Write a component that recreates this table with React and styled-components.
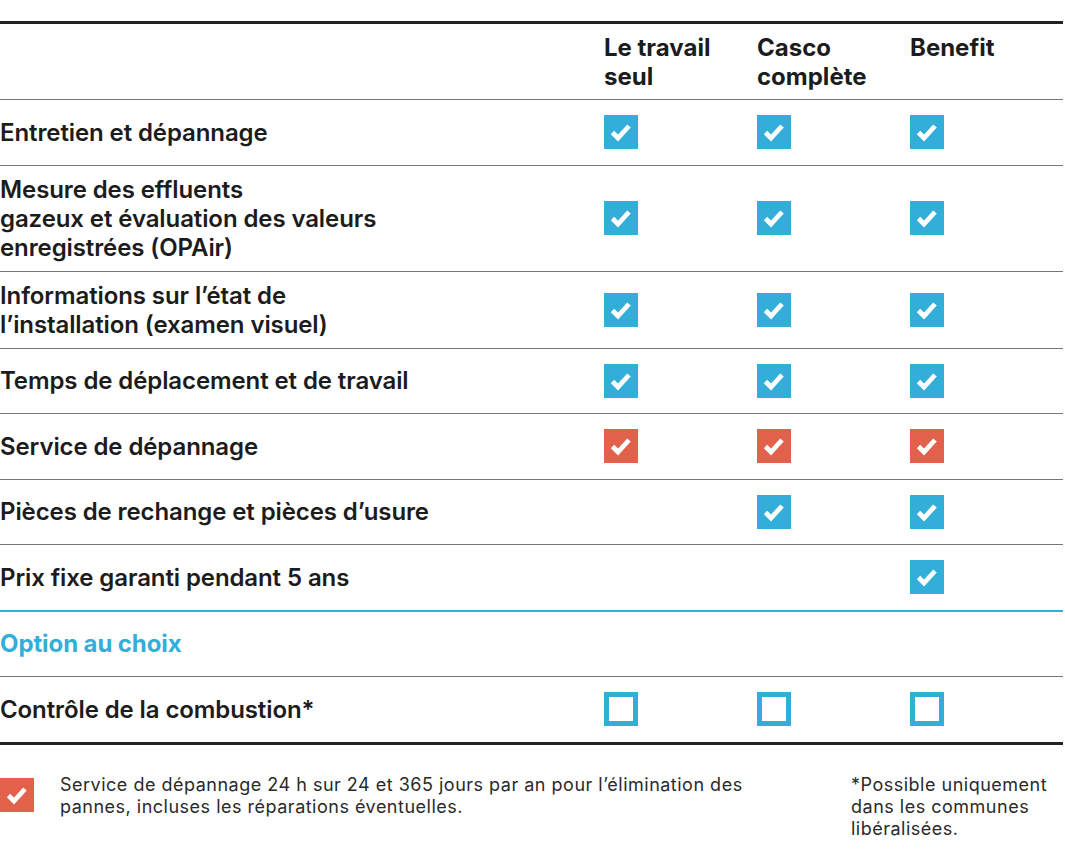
import styled, { createGlobalStyle } from "styled-components";

const BLUE = "#33aed9";
const RED = "#e2614b";
const INK = "#1c1c1c";

const GlobalStyle = createGlobalStyle`
  body {
    margin: 0;
    background: #fff;
    font-family: Inter, "Noto Sans", "Liberation Sans", sans-serif;
    color: ${INK};
  }
`;

const rows = [
  { label: ["Entretien et dépannage"], marks: ["blue", "blue", "blue"] },
  {
    label: ["Mesure des effluents", "gazeux et évaluation des valeurs", "enregistrées (OPAir)"],
    marks: ["blue", "blue", "blue"],
  },
  {
    label: ["Informations sur l’état de", "l’installation (examen visuel)"],
    marks: ["blue", "blue", "blue"],
  },
  { label: ["Temps de déplacement et de travail"], marks: ["blue", "blue", "blue"] },
  { label: ["Service de dépannage"], marks: ["red", "red", "red"] },
  { label: ["Pièces de rechange et pièces d’usure"], marks: [null, "blue", "blue"] },
  { label: ["Prix fixe garanti pendant 5 ans"], marks: [null, null, "blue"], last: true },
];

const CheckBox = ({ tone }) => {
  if (tone === "empty") return <EmptyBox />;
  return (
    <Box $tone={tone}>
      <svg width="34" height="34" viewBox="0 0 34 34">
        <path d="M8.5 17.5 L14 23 L25 11" fill="none" stroke="#fff" strokeWidth="4.8" />
      </svg>
    </Box>
  );
};

const App = () => {
  return (
    <>
      <GlobalStyle />
      <Page>
        <Table>
          <HeaderRow>
            <Cell />
            <HeadCell>Le travail<br />seul</HeadCell>
            <HeadCell>Casco<br />complète</HeadCell>
            <HeadCell>Benefit</HeadCell>
          </HeaderRow>
          {rows.map((row, i) => (
            <Row key={i} $accent={row.last}>
              <Label>
                {row.label.map((line, j) => (
                  <span key={j}>{line}</span>
                ))}
              </Label>
              {row.marks.map((m, k) => (
                <MarkCell key={k}>{m && <CheckBox tone={m} />}</MarkCell>
              ))}
            </Row>
          ))}
          <Row>
            <Label $blue>Option au choix</Label>
          </Row>
          <Row $closing>
            <Label>Contrôle de la combustion*</Label>
            <MarkCell><CheckBox tone="empty" /></MarkCell>
            <MarkCell><CheckBox tone="empty" /></MarkCell>
            <MarkCell><CheckBox tone="empty" /></MarkCell>
          </Row>
        </Table>
        <Footer>
          <Legend>
            <LegendMark>
              <CheckBox tone="red" />
            </LegendMark>
            <FootText>
              Service de dépannage 24 h sur 24 et 365 jours par an pour l’élimination des
              <br />
              pannes, incluses les réparations éventuelles.
            </FootText>
          </Legend>
          <Note>
            *Possible uniquement
            <br />
            dans les communes
            <br />
            libéralisées.
          </Note>
        </Footer>
      </Page>
    </>
  );
};

export default App;

const Page = styled.div`
  width: 1063px;
  padding-top: 21px;
`;

const Table = styled.div`
  border-top: 3px solid #222;
  border-bottom: 3px solid #222;
`;

const grid = `
  display: grid;
  grid-template-columns: 604px 153px 153px 153px;
`;

const HeaderRow = styled.div`
  ${grid}
  min-height: 58px;
  padding: 9px 0 8px;
  border-bottom: 1px solid #777;
`;

const Cell = styled.div``;

const HeadCell = styled.div`
  font-size: 24px;
  line-height: 29px;
  font-weight: 700;
`;

const Row = styled.div`
  ${grid}
  align-items: center;
  min-height: 46.5px;
  padding: 9px 0;
  border-bottom: ${(p) =>
    p.$accent ? `2px solid ${BLUE}` : p.$closing ? "none" : "1px solid #777"};
`;

const Label = styled.div`
  display: flex;
  flex-direction: column;
  font-size: 24px;
  line-height: 29px;
  letter-spacing: -0.1px;
  color: ${(p) => (p.$blue ? BLUE : INK)};
  font-weight: ${(p) => (p.$blue ? 700 : 600)};
`;

const MarkCell = styled.div`
  display: flex;
  align-items: center;
`;

const Box = styled.div`
  width: 34px;
  height: 34px;
  background: ${(p) => (p.$tone === "red" ? RED : BLUE)};

  svg {
    display: block;
  }
`;

const EmptyBox = styled.div`
  width: 34px;
  height: 34px;
  box-sizing: border-box;
  border: 5px solid ${BLUE};
`;

const Footer = styled.div`
  display: flex;
  align-items: flex-start;
  justify-content: space-between;
  padding-top: 27px;
`;

const Legend = styled.div`
  display: flex;
  align-items: flex-start;
  gap: 26px;
`;

const LegendMark = styled.div`
  padding-top: 6px;
`;

const FootText = styled.p`
  margin: 0;
  padding-top: 2px;
  font-size: 18px;
  line-height: 22px;
  letter-spacing: 0.5px;
  color: #2a2a2a;
`;

const Note = styled.p`
  margin: 0;
  padding-top: 2px;
  width: 212px;
  font-size: 18px;
  line-height: 22px;
  letter-spacing: 0.5px;
  color: #2a2a2a;
`;
